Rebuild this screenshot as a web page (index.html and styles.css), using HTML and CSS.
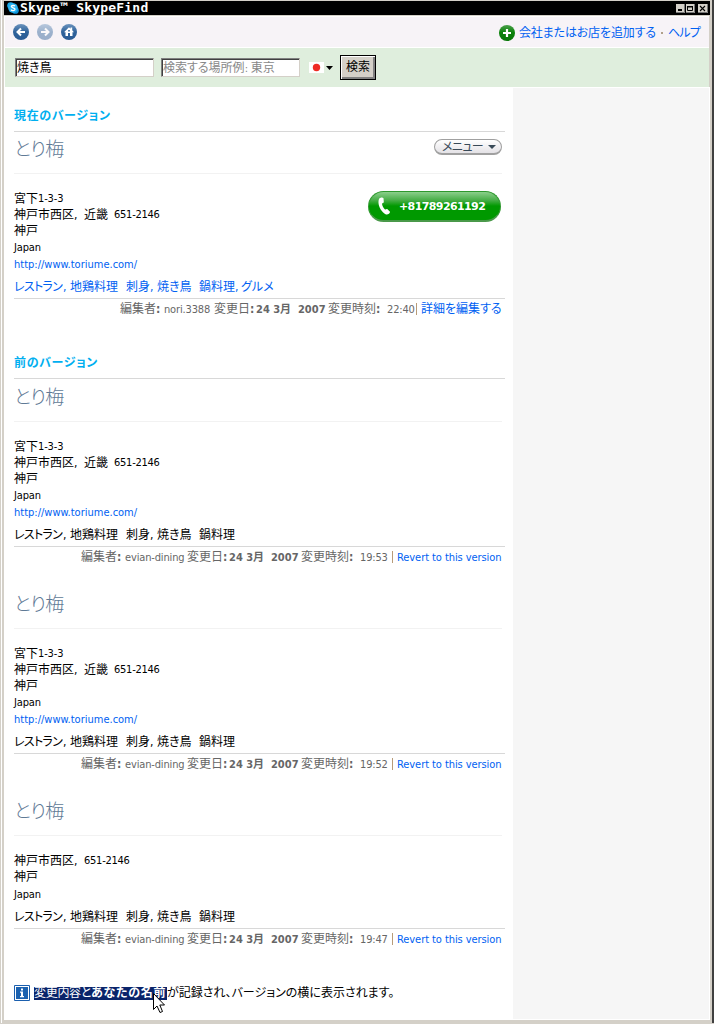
FILE: index.html
```html
<!DOCTYPE html>
<html lang="ja">
<head>
<meta charset="utf-8">
<title>Skype™ SkypeFind</title>
<link rel="stylesheet" href="styles.css">
</head>
<body>
<div class="window">
  <header class="titlebar">
    <svg class="app-icon" width="12" height="12" viewBox="0 0 12 12"><circle cx="3.6" cy="3.6" r="3.4" fill="#19a9ea"/><circle cx="8.4" cy="8.4" r="3.4" fill="#0b8fd6"/><circle cx="6" cy="6" r="4.8" fill="#29b4f2"/><path d="M8 4.2C7.3 3.3 4.3 3.1 4.3 4.6S8 5.700 8 7.300S4.800 9 4 7.700" fill="none" stroke="#fff" stroke-width="1.300"/></svg>
    <span class="app-title">Skype™ SkypeFind</span>
    <div class="controls">
      <svg width="9" height="9" viewBox="0 0 9 9"><path d="M0 0h9v9H0z" fill="#d4d0c8"/><path d="M0 8.500h8.500V0" stroke="#777" fill="none"/><path d="M2 5h4v2H2z"/></svg>
      <svg width="9" height="9" viewBox="0 0 9 9"><path d="M0 0h9v9H0z" fill="#d4d0c8"/><path d="M0 8.500h8.500V0" stroke="#777" fill="none"/><path d="M1.500 2.500h5v4h-5z" fill="none" stroke="#000"/><path d="M1 2h6v1.500H1z"/></svg>
      <svg class="close" width="10" height="9" viewBox="0 0 10 9"><path d="M0 0h10v9H0z" fill="#d4d0c8"/><path d="M0 8.500h9.500V0" stroke="#777" fill="none"/><path d="M2 2l5 5M7 2L2 7" stroke="#000" stroke-width="1.100"/></svg>
    </div>
  </header>
  <nav class="toolbar">
    <svg width="0" height="0" class="defs"><defs>
      <linearGradient id="blue" x1="0" y1="0" x2="0" y2="1"><stop offset="0" stop-color="#6b93bd"/><stop offset=".5" stop-color="#2f639b"/><stop offset="1" stop-color="#2a5b94"/></linearGradient>
      <linearGradient id="green" x1="0" y1="0" x2="0" y2="1"><stop offset="0" stop-color="#4da04d"/><stop offset=".45" stop-color="#0b820b"/><stop offset="1" stop-color="#087608"/></linearGradient>
    </defs></svg>
    <svg width="16" height="16" viewBox="0 0 16 16"><circle cx="8" cy="8" r="8" fill="url(#blue)"/><path d="M12 8H5M8 4.500L4.500 8L8 11.500" stroke="#fff" stroke-width="2" fill="none"/></svg>
    <svg class="dim" width="16" height="16" viewBox="0 0 16 16"><circle cx="8" cy="8" r="8" fill="url(#blue)"/><path d="M4 8h7M8 4.500L11.500 8L8 11.500" stroke="#fff" stroke-width="2" fill="none"/></svg>
    <svg width="16" height="16" viewBox="0 0 16 16"><circle cx="8" cy="8" r="8" fill="url(#blue)"/><path d="M3 8.200L8 3.200l1.500 1.500V3.500h1.700v2.700L13 8.200h-1.500V12h-7V8.200z" fill="#fff"/><path d="M7 9h2v3H7zM7.200 6h1.600v1.500H7.200z" fill="#2f639b"/></svg>
    <div class="actions">
      <svg width="16" height="16" viewBox="0 0 16 16"><circle cx="8" cy="8" r="8" fill="url(#green)"/><path d="M4 8h8M8 4v8" stroke="#fff" stroke-width="2.200"/></svg>
      <a class="add">会社またはお店を追加する</a><span class="dot"></span><a class="help">ヘルプ</a>
    </div>
  </nav>
  <form class="search">
    <div class="field query">焼き鳥</div>
    <div class="field place">検索する場所例<span class="lat">: </span>東京</div>
    <svg class="flag" width="24" height="11" viewBox="0 0 24 11"><path d="M0 0h15v11H0z" fill="#fff"/><circle cx="7.500" cy="5.500" r="3.700" fill="#ee2b24"/><path d="M17 4h7l-3.500 4z"/></svg>
    <div class="submit">検索</div>
  </form>
  <div class="body">
    <main class="content">
      <h2 class="first-head">現在のバージョン</h2>
      <article class="entry current">
        <div class="name"><span>とり梅</span>
          <div class="menu"><span>メニュー</span><svg width="8" height="4" viewBox="0 0 8 4"><path d="M0 0h8L4 4z" fill="#394a58"/></svg></div>
        </div>
        <div class="details">
          <div class="address">
            <p>宮下<span class="lat">1-3-3</span></p>
            <p class="zip">神戸市西区<span class="comma">,</span>近畿<span class="lat code">651-2146</span></p>
            <p>神戸</p>
            <p class="lat tall">Japan</p>
            <p class="lat tall url"><a>http://www.toriume.com/</a></p>
          </div>
          <div class="call">
            <svg width="12" height="18" viewBox="0 0 12 18"><path d="M1 2C2 .2 5 0 5.500 1.300L5.800 5C5.600 6.300 4.500 6 4 6.800C4.200 9 5.400 11 7 12.500C8 12.900 8.400 11.600 9.500 12.300L12 14.700C12.200 16.500 9.800 18 8 17.400C2.500 14.500-.9 7.500 1 2z" fill="#fff"/></svg>
            <span>+81789261192</span>
          </div>
        </div>
        <p class="tags"><a><span class="t1">レストラン</span><i>,</i><span class="t2">地鶏料理</span><span class="t3">刺身</span><i>,</i><span class="t4">焼き鳥</span><span class="t5">鍋料理</span><i class="last">,</i><span class="t6">グルメ</span></a></p>
        <p class="meta"><span class="m1">編集者<b>:</b></span><span class="who1 lat">nori.3388</span><span class="m2">変更日<b>:</b></span><b class="date">24 3月  2007</b><span class="m3">変更時刻<b>:</b></span><span class="time1 lat">22:40</span><span class="bar1"></span><a class="edit">詳細を編集する</a></p>
      </article>
      <h2 class="second-head">前のバージョン</h2>
      <article class="entry">
        <div class="name"><span>とり梅</span></div>
        <div class="details"><div class="address">
          <p>宮下<span class="lat">1-3-3</span></p>
          <p class="zip">神戸市西区<span class="comma">,</span>近畿<span class="lat code">651-2146</span></p>
          <p>神戸</p>
          <p class="lat tall">Japan</p>
          <p class="lat tall url"><a>http://www.toriume.com/</a></p>
        </div></div>
        <p class="tags"><span class="t1">レストラン</span><i>,</i><span class="t2">地鶏料理</span><span class="t3">刺身</span><i>,</i><span class="t4">焼き鳥</span><span class="t5">鍋料理</span></p>
        <p class="meta"><span class="m1">編集者<b>:</b></span><span class="who2 lat">evian-dining</span><span class="m2">変更日<b>:</b></span><b class="date">24 3月  2007</b><span class="m3">変更時刻<b>:</b></span><span class="time2 lat">19:53</span><span class="bar2"></span><a class="revert lat">Revert to this version</a></p>
      </article>
      <article class="entry">
        <div class="name"><span>とり梅</span></div>
        <div class="details"><div class="address">
          <p>宮下<span class="lat">1-3-3</span></p>
          <p class="zip">神戸市西区<span class="comma">,</span>近畿<span class="lat code">651-2146</span></p>
          <p>神戸</p>
          <p class="lat tall">Japan</p>
          <p class="lat tall url"><a>http://www.toriume.com/</a></p>
        </div></div>
        <p class="tags"><span class="t1">レストラン</span><i>,</i><span class="t2">地鶏料理</span><span class="t3">刺身</span><i>,</i><span class="t4">焼き鳥</span><span class="t5">鍋料理</span></p>
        <p class="meta"><span class="m1">編集者<b>:</b></span><span class="who2 lat">evian-dining</span><span class="m2">変更日<b>:</b></span><b class="date">24 3月  2007</b><span class="m3">変更時刻<b>:</b></span><span class="time2 lat">19:52</span><span class="bar2"></span><a class="revert lat">Revert to this version</a></p>
      </article>
      <article class="entry short">
        <div class="name"><span>とり梅</span></div>
        <div class="details"><div class="address">
          <p class="zip">神戸市西区<span class="comma">,</span><span class="lat">651-2146</span></p>
          <p>神戸</p>
          <p class="lat tall">Japan</p>
        </div></div>
        <p class="tags"><span class="t1">レストラン</span><i>,</i><span class="t2">地鶏料理</span><span class="t3">刺身</span><i>,</i><span class="t4">焼き鳥</span><span class="t5">鍋料理</span></p>
        <p class="meta"><span class="m1">編集者<b>:</b></span><span class="who2 lat">evian-dining</span><span class="m2">変更日<b>:</b></span><b class="date">24 3月  2007</b><span class="m3">変更時刻<b>:</b></span><span class="time2 lat">19:47</span><span class="bar2"></span><a class="revert lat">Revert to this version</a></p>
      </article>
      <div class="note">
        <svg width="16" height="16" viewBox="0 0 16 16"><path d="M.5.5h15v15H.5z" fill="#fff" stroke="#1b5fae"/><path d="M2 2h12v12H2z" fill="#1c62b0"/><path d="M7 3.500h2v2H7zM6 6.500h3V11h1v1.300H6V11h1V7.800H6z" fill="#fff"/></svg>
        <span class="selected"><span class="s1">変更内容と</span><b>あなたの名前</b></span><span class="rest">が記録され、バージョンの横に表示されます。</span>
        <svg class="cursor" width="13" height="21" viewBox="0 0 13 21"><path d="M.5.500v16l3.500-3.500L7 19.500l2.500-1L6.800 12H11.500z" fill="#fff" stroke="#000"/></svg>
      </div>
    </main>
    <aside class="side"></aside>
  </div>
</div>
</body>
</html>
```
FILE: styles.css
```css
* { box-sizing: border-box; }
body {
  margin: 0; width: 714px; height: 1024px; overflow: hidden; background: #d4d0c8;
  font: 12px/16px "DejaVu Sans Condensed", "Noto Sans CJK JP", sans-serif;
  font-feature-settings: "palt"; color: #000; white-space: nowrap;
}
p, h2 { margin: 0; }
svg { display: block; flex: none; }
a { color: #0061f2; }
i { font-style: normal; }
.lat { font-size: 11px; letter-spacing: -.15px; }
.window {
  height: 1023px; padding: 1px 2px 3px 2px; border-right: 2px solid #404040;
  border-left: 1px solid #d4d0c8; background: #d4d0c8; box-shadow: inset 1px 0 #fff;
  display: flex; flex-direction: column;
}
.titlebar {
  height: 14px; margin: 0 0 1px 1px; background: #000; color: #fff; display: flex; align-items: center;
  padding: 0 2px 0 3px; flex: none;
}
.app-title { font: bold 13px/14px "DejaVu Sans Mono", monospace; letter-spacing: .2px; margin-left: 1px; }
.controls { margin-left: auto; display: flex; gap: 1px; }
.close { margin-left: 2px; }
.toolbar {
  height: 32px; margin: 0 1px; border: 1px solid #fff; border-right: 0; background: #f7f3f7; flex: none;
  display: flex; align-items: center; gap: 8px; padding: 0 9px 0 8px;
}
.defs { position: absolute; }
.dim { opacity: .45; }
.actions { margin-left: auto; display: flex; align-items: center; height: 30px; padding-top: 2px; }
.add { width: 137px; margin-left: 4px; letter-spacing: -.15px; }
.dot { width: 2px; height: 2px; margin: 0 5px 0 5px; background: #b0a08a; }
.help { width: 32px; letter-spacing: -.8px; }
.search {
  height: 39px; margin: 0 1px 0 1px; border-left: 1px solid #fff; background: #dfeedd; flex: none;
  display: flex; align-items: center; padding-left: 10px;
}
.field {
  width: 139px; height: 19px; background: #fff; border: 1px solid #808080; padding-left: 1px;
  border-right-color: #d4d0c8; border-bottom-color: #d4d0c8; box-shadow: inset 1px 1px #404040; line-height: 18px;
}
.place { margin-left: 7px; color: #888; }
.flag { margin-left: 9px; }
.submit {
  width: 36px; height: 25px; margin-left: 7px; border: 1px solid #000; background: #d4d0c8; text-align: center; line-height: 23px;
  box-shadow: inset 1px 1px #fff, inset -2px -2px #808080;
}
.body { flex: 1; margin: 0 0 0 1px; background: #fff; display: flex; min-height: 0; }
.content { width: 509px; padding: 19px 8px 0 10px; }
.side { flex: 1; margin: 1px 1px 1px 0; background: #f6f6f6; }
h2 {
  width: 491px; height: 26px; border-bottom: 1px solid #d8d8d8; font-size: 12px; line-height: 20px;
  letter-spacing: .65px; color: #00aff0;
}
.second-head { margin-top: 15px; }
.entry { width: 488px; padding-bottom: 21px; }
.name { height: 43px; border-bottom: 1px solid #f2f2f2; color: #5f7a96; font-weight: 300; font-size: 20px; line-height: 34px; display: flex; justify-content: space-between; }
.name > span { font-family: "Noto Sans CJK JP Light", "Noto Sans CJK JP", sans-serif; font-size: 19px; letter-spacing: -.7px; }
.current .name { height: 42px; line-height: 32px; }
.menu {
  width: 68px; height: 16px; margin-top: 7px; border: 1px solid #a0a0a0; border-bottom-width: 2px; border-radius: 8px;
  background: linear-gradient(#fff, #e4e2e6); color: #394a58; font-weight: 400; font-size: 12px; line-height: 12px;
  letter-spacing: -.6px;
  display: flex; align-items: center; justify-content: space-between; padding: 0 5px 0 7px;
}
.details { display: flex; justify-content: space-between; padding-top: 17px; }
.address p { height: 16px; display: flex; }
.address .tall { height: 17px; line-height: 18px; }
.comma { width: 10px; }
.code { margin-left: 6px; }
.zip .lat { letter-spacing: -.25px; }
.address .url { line-height: 17px; }
.url a { letter-spacing: 0; }
.call {
  width: 133px; height: 31px; border-radius: 16px; border: 1px solid #2d982d; border-bottom: 2px solid #4a994a;
  background: linear-gradient(#8bcf8b 0, #45ad45 30%, #009900 50%, #009900);
  display: flex; align-items: center; padding-left: 9px; color: #fff; margin-right: 1px;
  font: bold 11px/28px "DejaVu Sans", sans-serif; letter-spacing: -.6px;
}
.call span { margin-left: 9px; padding-top: 1px; }
.tags { margin-top: 4px; height: 21px; line-height: 20px; display: flex; }
.tags a { display: flex; }
.tags i { width: 7px; }
.tags .last { width: 6px; }
.t1 { width: 49px; letter-spacing: -.7px; }
.t2 { width: 56px; }
.t3 { width: 24px; }
.t4 { width: 42px; }
.t5 { width: 36px; }
.meta { height: 19px; border-top: 1px solid #d8d8d8; color: #666; line-height: 21px; display: flex; justify-content: flex-end; width: 491px; padding-right: 3px; }
.m1 { width: 44px; }
.who1 { width: 50px; }
.who2 { width: 62px; }
.m2 { width: 42px; }
.date { width: 72px; white-space: pre; font-size: 11px; }
.m3 { width: 59px; }
.time1 { width: 29px; }
.time2 { width: 32px; }
.bar1, .bar2 { width: 1px; height: 12px; margin: 4px 4px 0 0; background: #b89b78; }
.edit { width: 81px; }
.revert { width: 105px; letter-spacing: -.07px; }
.short .tall { margin-top: 1px; }
.note { position: relative; margin-top: 16px; height: 18px; display: flex; align-items: center; line-height: 13px; }
.selected { width: 133px; margin-left: 4px; background: #0a246a; color: #fff; display: flex; }
.selected b { letter-spacing: .7px; }
.s1 { width: 57px; letter-spacing: -.3px; }
.cursor { position: absolute; left: 139px; top: 9px; }
```
